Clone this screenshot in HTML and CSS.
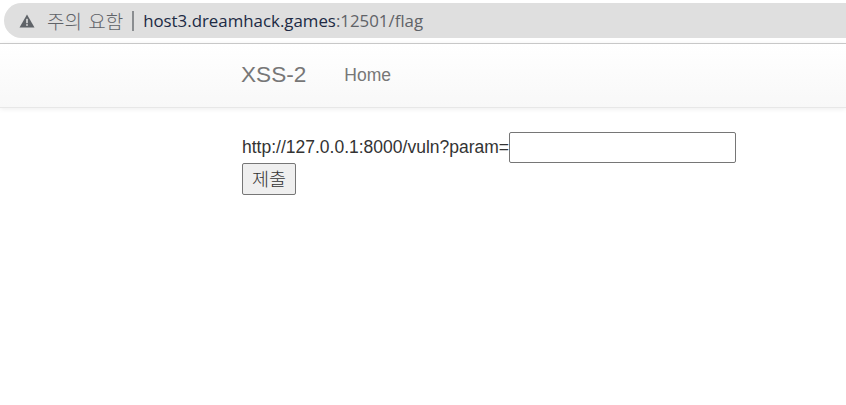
FILE: index.html
```html
<!DOCTYPE html>
<html lang="en">
<head>
    <meta charset="UTF-8">
    <meta name="viewport" content="width=device-width, initial-scale=1.0">
    <title>XSS-2</title>
    <link rel="stylesheet" href="styles.css">
</head>
<body>

<div class="browser-bar">
    <div class="address">
        <svg class="warn-icon" width="16" height="14" viewBox="0 0 16 14">
            <path d="M8 0.5L15.5 13.5H0.5Z" fill="#5f6368"/>
            <rect x="7.2" y="4.8" width="1.6" height="4.4" fill="#dfdfdf"/>
            <rect x="7.2" y="10.2" width="1.6" height="1.6" fill="#dfdfdf"/>
        </svg>
        <span class="warn-text">주의 요함</span>
        <span class="divider"></span>
        <span class="host">host3.dreamhack.games</span><span class="path">:12501/flag</span>
    </div>
</div>

<nav class="navbar">
    <div class="container nav-row">
        <a class="brand">XSS-2</a>
        <a class="nav-link">Home</a>
    </div>
</nav>

<div class="container content">
    <form>
        <label class="param-label">http://127.0.0.1:8000/vuln?param=</label><input class="param-input" type="text"><br>
        <button class="submit-btn" type="button">제출</button>
    </form>
</div>

</body>
</html>
```

FILE: styles.css
```css
body {
    margin: 0;
    padding: 0;
    background: #FFFFFF;
    font-family: "Liberation Sans", Arial, "Noto Sans CJK KR", sans-serif;
    overflow: hidden;
}
.browser-bar {
    height: 43px;
    padding-top: 3px;
    box-sizing: border-box;
}
.address {
    height: 35px;
    margin-left: 4px;
    padding-left: 15px;
    background: #DFDFDF;
    border-radius: 18px 0 0 18px;
    display: flex;
    align-items: center;
    font-family: "Noto Sans CJK KR", "Open Sans", sans-serif;
    font-size: 19px;
    font-weight: 300;
}
.warn-icon {
    margin-right: 12px;
}
.warn-text {
    color: #5F6368;
    word-spacing: 2px;
}
.divider {
    width: 2px;
    height: 20px;
    background: #8A8D90;
    margin: 0 9px 0 9px;
}
.host {
    font-family: "Open Sans", sans-serif;
    font-size: 16.85px;
    font-weight: 400;
    color: #202A44;
}
.path {
    font-family: "Open Sans", sans-serif;
    font-size: 16.85px;
    font-weight: 400;
    color: #5F6368;
}
.navbar {
    height: 65px;
    box-sizing: border-box;
    border-top: 1px solid #C8C8C8;
    border-bottom: 1px solid #E7E7E7;
    background: linear-gradient(to bottom, #FFFFFF 0%, #F8F8F8 100%);
    box-shadow: 0 1px 5px rgba(0, 0, 0, 0.075);
}
.container {
    width: 604px;
    margin-left: 242px;
}
.nav-row {
    display: flex;
    align-items: center;
    height: 62px;
}
.brand {
    font-size: 22.6px;
    color: #777777;
    margin-left: -1px;
    margin-right: 38px;
}
.nav-link {
    font-size: 17.5px;
    color: #777777;
}
.content {
    padding-top: 24px;
    font-size: 17.5px;
    color: #333333;
}
.param-input {
    width: 227px;
    height: 31px;
    box-sizing: border-box;
    border: 1px solid #767676;
    border-radius: 2px;
    padding: 3px 2px 1px;
    margin: 0;
    background: #FFFFFF;
    vertical-align: baseline;
}
.submit-btn {
    width: 54px;
    height: 32px;
    box-sizing: border-box;
    margin: 0;
    padding: 0 0 2px;
    border: 1px solid #767676;
    border-radius: 2px;
    background: #EFEFEF;
    color: #333333;
    font-family: "Noto Sans CJK KR", sans-serif;
    font-size: 18.5px;
    font-weight: 300;
}
```
